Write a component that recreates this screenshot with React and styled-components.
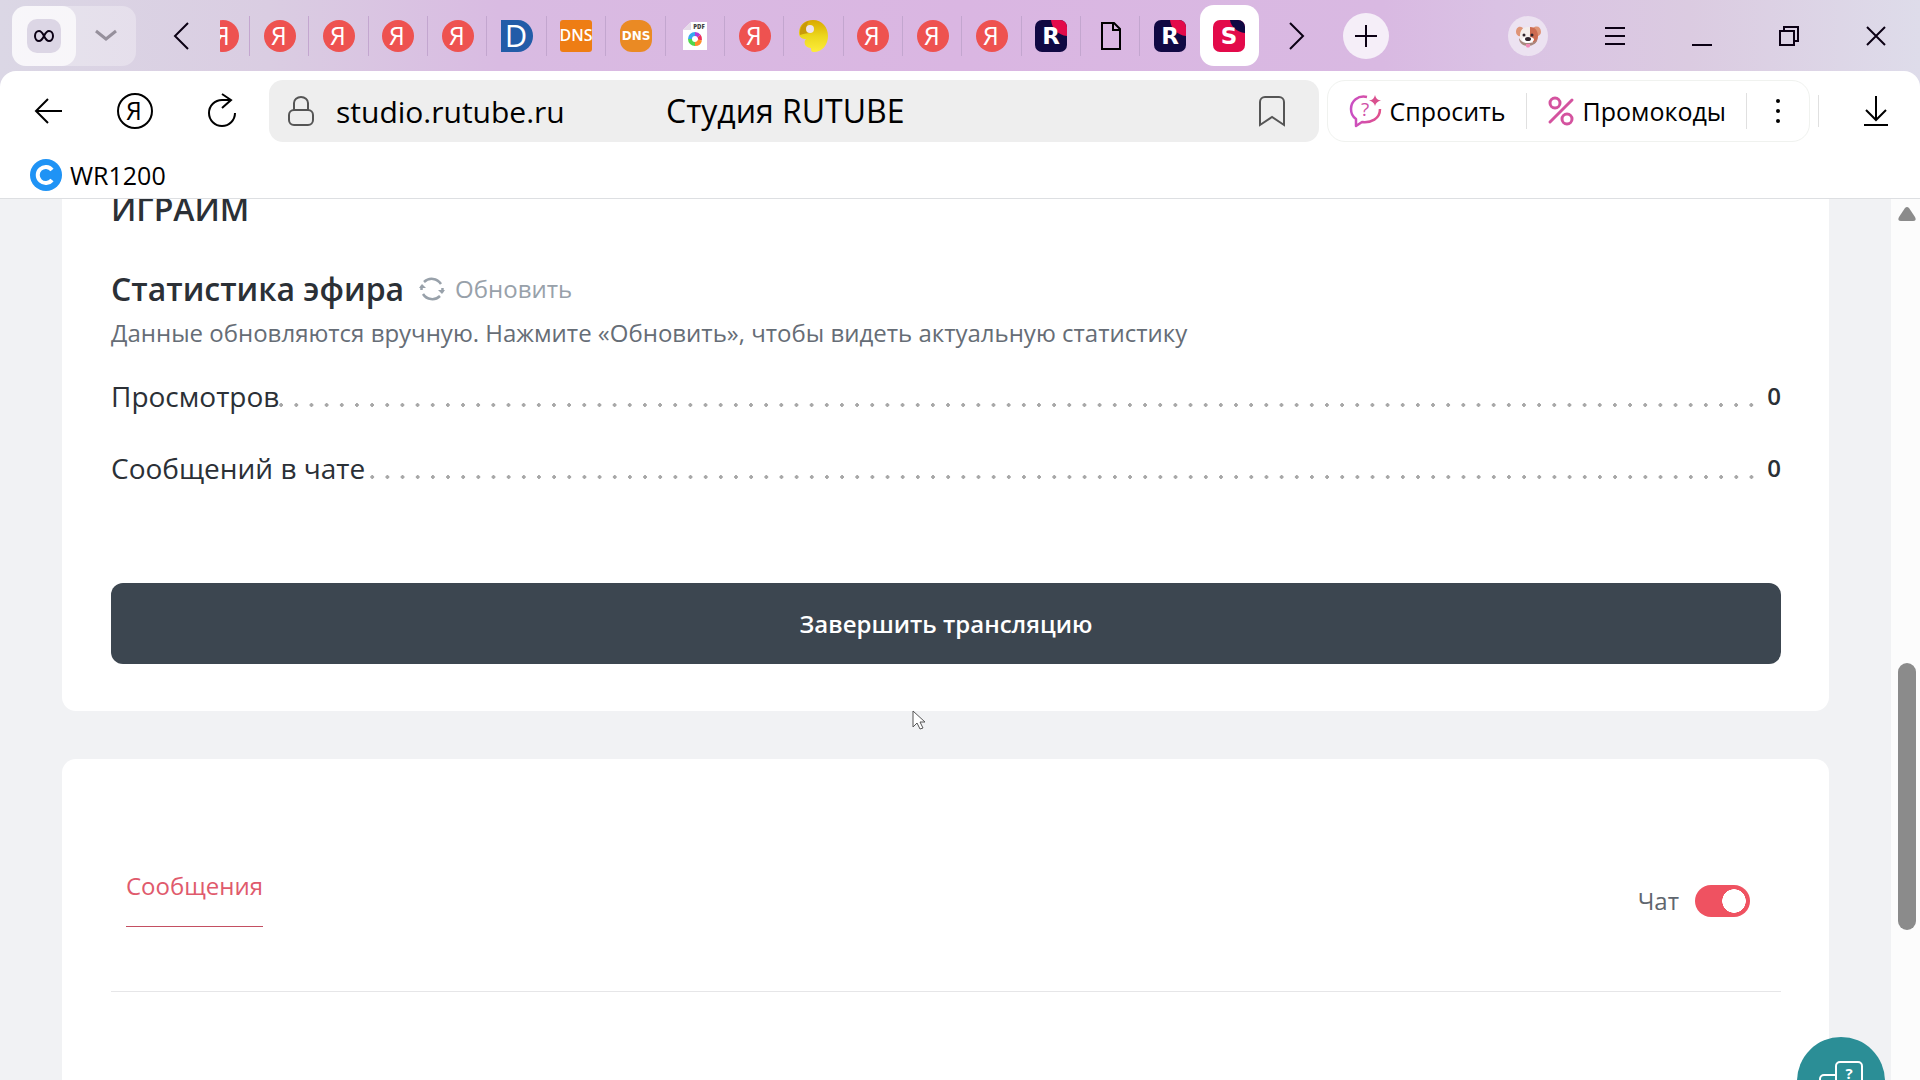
import { useState } from "react";
import styled, { createGlobalStyle } from "styled-components";

const GlobalStyle = createGlobalStyle`
    * {
        box-sizing: border-box;
    }

    body {
        margin: 0;
        overflow: hidden;
        font-family: "Open Sans", "Noto Sans", sans-serif;
        color: #2b3036;
    }

    button {
        font-family: inherit;
        color: inherit;
        background: none;
        border: 0;
        padding: 0;
        cursor: pointer;
    }

    svg {
        display: block;
        flex: none;
        overflow: visible;
    }

    h1, h2, p, dl, dd {
        margin: 0;
    }
`;

const Window = styled.div`
    display: flex;
    flex-direction: column;
    height: 100vh;
    background: linear-gradient(90deg, #dbd7e5 0%, #dacde2 14%, #d9bbe2 26%, #dab6e2 50%, #d9b9e2 72%, #dac2e4 78%, #dbcbe1 88%, #dedcea 100%);
`;

/* Tab strip */

const TabStrip = styled.header`
    display: flex;
    align-items: center;
    flex: none;
    height: 71px;
    padding: 0 1px 0 12px;
`;

const TabGroup = styled.div`
    display: flex;
    flex: none;
    height: 60px;
    border-radius: 14px;
    background: rgba(255, 255, 255, 0.3);
`;

const GroupButton = styled.button`
    display: grid;
    place-items: center;
    width: ${(props) => (props.$active ? "64px" : "60px")};
    border-radius: 14px;
    background: ${(props) => (props.$active ? "rgba(255, 255, 255, 0.7)" : "none")};
`;

const GroupBadge = styled.span`
    display: grid;
    place-items: center;
    width: 34px;
    height: 34px;
    border-radius: 10px;
    background: #dcd6e5;
`;

const ScrollButton = styled.button`
    display: grid;
    place-items: center;
    flex: none;
    width: 84px;
    height: 60px;
    padding: ${(props) => (props.$back ? "0 0 0 6px" : "0 8px 0 0")};
`;

const TabList = styled.nav`
    display: flex;
    flex: 0 1 1039px;
    min-width: 0;
    overflow: hidden;
`;

const Tab = styled.button`
    display: flex;
    align-items: center;
    justify-content: ${(props) => (props.$cut ? "flex-end" : "center")};
    flex: ${(props) => (props.$cut ? "0 0 30px" : "1 1 0")};
    min-width: 0;
    height: 61px;
    padding-right: ${(props) => (props.$cut ? "11px" : "0")};
    border-radius: ${(props) => (props.$active ? "14px" : "0")};
    background: ${(props) =>
        props.$active ? "#fff" : props.$last ? "none" : "linear-gradient(#c3a6cf, #c3a6cf) right center / 1px 40px no-repeat"};
`;

const NewTab = styled.button`
    display: grid;
    place-items: center;
    flex: none;
    width: 46px;
    height: 46px;
    border-radius: 50%;
    background: #f5eef8;
`;

const WindowControls = styled.div`
    display: flex;
    margin-left: auto;
`;

const WindowButton = styled.button`
    display: grid;
    place-items: center;
    width: 87px;
    height: 60px;
`;

/* Toolbar */

const Chrome = styled.div`
    flex: none;
    background: #fff;
    border-radius: 16px 16px 0 0;
    border-bottom: 1px solid #dddfe2;
`;

const Toolbar = styled.div`
    display: flex;
    align-items: center;
    height: 80px;
    padding: 0 1px 0 4px;
`;

const ToolButton = styled.button`
    display: grid;
    place-items: center;
    flex: none;
    width: ${(props) => props.$width || 87}px;
    height: 62px;
`;

const AddressBar = styled.div`
    display: flex;
    align-items: center;
    flex: 1;
    min-width: 0;
    height: 62px;
    margin: 0 8px 0 4px;
    padding: 0 34px 0 19px;
    border-radius: 14px;
    background: #eee;
`;

const UrlInput = styled.input`
    flex: none;
    width: 330px;
    margin-left: 22px;
    padding: 0;
    border: 0;
    outline: 0;
    background: none;
    font-family: inherit;
    font-size: 30px;
    color: #000;
`;

const PageTitle = styled.span`
    font-size: 32px;
    line-height: 44px;
    color: #000;
    white-space: nowrap;
`;

const BookmarkButton = styled.button`
    margin-left: auto;
`;

const Actions = styled.div`
    display: flex;
    align-items: center;
    flex: none;
    height: 62px;
    border: 1px solid #f0f2ef;
    border-radius: 18px;
`;

const ActionButton = styled.button`
    display: flex;
    align-items: center;
    gap: 9px;
    height: 36px;
    padding: 0 20px 0 21px;
    border-right: 1px solid #e0e0e0;
    font-size: 25px;
    line-height: 34px;
    color: #000;
    white-space: nowrap;
`;

const Divider = styled.span`
    flex: none;
    width: 1px;
    height: 32px;
    margin: 0 13px 0 8px;
    background: #e0e0e0;
`;

const Bookmarks = styled.nav`
    display: flex;
    align-items: center;
    height: 47px;
    padding: 0 30px;
`;

const BookmarkLink = styled.a`
    display: flex;
    align-items: center;
    gap: 8px;
    font-size: 25px;
    line-height: 34px;
    color: #000;
    text-decoration: none;
`;

/* Page */

const Viewport = styled.div`
    position: relative;
    display: flex;
    flex: 1;
    min-height: 0;
    overflow: hidden;
    background: #f1f2f4;
`;

const Page = styled.main`
    display: flex;
    flex-direction: column;
    gap: 48px;
    flex: 1;
    min-width: 0;
    padding: 0 62px;
`;

const Card = styled.section`
    flex: ${(props) => (props.$grow ? "1 0 auto" : "none")};
    padding: ${(props) => (props.$grow ? "111px 48px 0 49px" : "0 48px 47px 49px")};
    border-radius: ${(props) => (props.$grow ? "14px 14px 0 0" : "0 0 14px 14px")};
    background: #fff;
`;

const StreamTitle = styled.h1`
    font-size: 32px;
    font-weight: 600;
    line-height: 20px;
`;

const StatsHeader = styled.div`
    display: flex;
    align-items: center;
    gap: 15px;
    margin-top: 48px;
`;

const StatsTitle = styled.h2`
    font-size: 32px;
    font-weight: 600;
    line-height: 44px;
`;

const RefreshButton = styled.button`
    display: flex;
    align-items: center;
    gap: 10px;
    font-size: 24px;
    line-height: 32px;
    color: #98a1aa;
`;

const Hint = styled.p`
    margin-top: 6px;
    font-size: 24px;
    line-height: 32px;
    color: #666d76;
`;

const Stats = styled.dl`
    display: grid;
    gap: 32px;
    margin: 27px 0 95px;
`;

const StatRow = styled.div`
    display: flex;
    align-items: center;
`;

const StatName = styled.dt`
    font-size: 28px;
    line-height: 40px;
`;

/* dots repeat from the right edge so that both rows line up */
const Leader = styled.span`
    flex: 1;
    height: 40px;
    margin-right: 8px;
    background: radial-gradient(circle 2px at 50% 29px, #a8a8a8 85%, transparent) right top / calc(91px / 6) 40px repeat-x;
`;

const StatValue = styled.dd`
    font-size: 24px;
    font-weight: 600;
    line-height: 40px;
`;

const EndButton = styled.button`
    width: 100%;
    height: 81px;
    border-radius: 12px;
    background: #3c4650;
    color: #fff;
    font-size: 24px;
    font-weight: 600;
`;

const ChatHeader = styled.div`
    display: flex;
    align-items: flex-end;
    justify-content: space-between;
    padding: 0 31px 64px 15px;
    border-bottom: 1px solid #e6e6e8;
`;

const ChatTab = styled.button`
    padding-bottom: 24px;
    border-bottom: 1px solid #c44f62;
    color: #e05a6c;
    font-size: 24px;
    line-height: 32px;
`;

const SwitchLabel = styled.label`
    display: flex;
    align-items: center;
    gap: 16px;
    padding-bottom: 10px;
    font-size: 24px;
    line-height: 32px;
    color: #5f666e;
`;

const Switch = styled.input`
    appearance: none;
    width: 55px;
    height: 32px;
    margin: 0;
    border-radius: 16px;
    background: ${(props) =>
        props.checked
            ? "radial-gradient(circle 12px at 39px 50%, #fff 96%, transparent) #ef5261"
            : "radial-gradient(circle 12px at 16px 50%, #fff 96%, transparent) #b9bec4"};
`;

const ScrollTrack = styled.div`
    display: flex;
    flex-direction: column;
    align-items: center;
    flex: none;
    width: 29px;
    padding: 8px 0 0 3px;
    background: #fcfcfc;
`;

const ScrollThumb = styled.div`
    width: 18px;
    height: 267px;
    margin-top: 442px;
    border-radius: 9px;
    background: #8b8b8b;
`;

const HelpButton = styled.button`
    position: absolute;
    right: 35px;
    bottom: -45px;
    width: 88px;
    height: 88px;
    border-radius: 50%;
    background: #2b8e96;
`;

const Pointer = styled.svg`
    position: absolute;
    left: 912px;
    top: 511px;
`;

/* Icons */

const Line = ({ w, h, d, color = "#0b0014", width = 2, ...rest }) => (
    <svg width={w} height={h} viewBox={`0 0 ${w} ${h}`} fill="none" stroke={color} strokeWidth={width} {...rest}>
        <path d={d} />
    </svg>
);

const YandexIcon = () => (
    <svg width="32" height="32" viewBox="0 0 32 32">
        <circle cx="16" cy="16" r="16" fill="#ee5250" />
        <text x="15" y="25" fontSize="25" fontWeight="500" textAnchor="middle" fill="#fff">Я</text>
    </svg>
);

const DIcon = () => (
    <svg width="32" height="32" viewBox="0 0 32 32">
        <path d="M0 0h17a15 16 0 0 1 0 32H0z" fill="#225ca8" />
        <text x="15" y="27" fontSize="31" fontWeight="500" textAnchor="middle" fill="#fff">D</text>
    </svg>
);

const DnsIcon = ({ round }) => (
    <svg width="32" height="32" viewBox="0 0 32 32">
        <rect width="32" height="32" rx={round ? 12 : 3} fill={round ? "#ea8a24" : "#ee7d14"} />
        <text
            x="16"
            y={round ? 20 : 21}
            fontSize={round ? 12 : 16}
            fontWeight={round ? 700 : 600}
            fontFamily={round ? "DejaVu Sans" : "Open Sans"}
            textAnchor="middle"
            fill="#fff"
        >
            DNS
        </text>
    </svg>
);

const PdfIcon = () => (
    <svg width="32" height="32" viewBox="0 0 32 32" fill="none">
        <path d="M12 2h16v28H4V10z" fill="#fff" />
        <path d="M12 2v8H4z" fill="#e6dbe9" />
        <text x="20" y="9" fontSize="6" fontWeight="800" textAnchor="middle" fill="#444">PDF</text>
        <g strokeWidth="4">
            <path d="M16 14a5 5 0 0 1 4 2" stroke="#b13bd6" />
            <path d="M20 16a5 5 0 0 1 1 4" stroke="#f0305a" />
            <path d="M21 20a5 5 0 0 1-5 4" stroke="#ff8a2a" />
            <path d="M16 24a5 5 0 0 1-5-5" stroke="#4fd64a" />
            <path d="M11 19a5 5 0 0 1 5-5" stroke="#37a8f0" />
        </g>
    </svg>
);

const LampIcon = () => (
    <svg width="32" height="32" viewBox="0 0 32 32">
        <defs>
            <linearGradient id="lamp" x1="0" y1="0" x2="0" y2="1">
                <stop offset="0" stopColor="#d9a800" />
                <stop offset="0.5" stopColor="#ecd71c" />
                <stop offset="1" stopColor="#fdec3a" />
            </linearGradient>
        </defs>
        <path d="M15 0c9 0 15 7 15 16s-6 16-14 16c-3 0-3-2-3-4-6 0-8-6-5-9-4 0-7-2-7-6C1 5 7 0 15 0z" fill="url(#lamp)" />
        <path d="M2 15C1 7 6 2 11 1c-3 3-2 9 1 12-4 0-7 1-10 2z" fill="#c99a0a" />
        <circle cx="12" cy="9" r="4" fill="#efe3ee" />
    </svg>
);

const RutubeIcon = ({ letter, back, corner }) => (
    <svg width="32" height="32" viewBox="0 0 32 32">
        <rect width="32" height="32" rx="7" fill={back} />
        <path
            d={letter === "R" ? "M16 0c1 9 7 15 16 16V7a7 7 0 0 0-7-7z" : "M17 0c1 7 7 12 15 13V7a7 7 0 0 0-7-7z"}
            fill={corner}
        />
        <text x="16" y="24" fontSize="23" fontWeight="700" fontFamily="DejaVu Sans" textAnchor="middle" fill="#fff">
            {letter}
        </text>
    </svg>
);

const FileIcon = () => (
    <Line w={32} h={32} d="M7 3h12l6 6v20H7zM18 3v7h7" color="#000" />
);

const PuppyIcon = () => (
    <svg width="40" height="40" viewBox="0 0 40 40">
        <circle cx="20" cy="20" r="20" fill="#ece2f1" />
        <path d="M15 12C11 9 8 12 8 16c0 3 3 5 5 4zM25 12c4-3 8-1 8 4 0 3-3 5-6 4z" fill="#df9476" />
        <path d="M12 20c0-6 3-9 8-9s9 3 9 9c2 6-4 10-9 10s-10-3-8-10z" fill="#f4edeb" />
        <path d="M22 11c6 0 8 5 8 9 0 4-2 8-5 8 1-4-4-6-3-10z" fill="#cd6b50" />
        <path d="M11 22c0 5 4 8 9 8s9-3 9-7c-2 3-5 4-9 4s-7-1-9-5z" fill="#a8887f" />
        <path d="M14 23c2-3 10-3 12 0 0 5-12 5-12 0z" fill="#fff" />
        <circle cx="16" cy="19" r="1.5" fill="#30242c" />
        <circle cx="24" cy="19" r="1.5" fill="#30242c" />
        <ellipse cx="20" cy="23" rx="3" ry="2" fill="#30242c" />
        <path d="M18 28h4v2c0 2-4 2-4 0z" fill="#f08ab6" />
    </svg>
);

const AskIcon = () => (
    <svg width="32" height="32" viewBox="0 0 32 32" fill="none">
        <defs>
            <linearGradient id="ask" x1="0" y1="0" x2="1" y2="0">
                <stop offset="0" stopColor="#c94fc4" />
                <stop offset="1" stopColor="#e0508c" />
            </linearGradient>
        </defs>
        <path
            d="M18 2C9 0 2 6 2 14c0 5 2 8 5 10v7l6-4c9 1 18-3 18-13"
            stroke="url(#ask)"
            strokeWidth="2.5"
            strokeLinejoin="round"
        />
        <path d="M26 0q1 5 6 5.500-5 1-6 5.500-1-4.500-6-5.500 5-.5 6-5.500z" fill="#d9508e" />
        <text x="16" y="21" fontSize="19" fontWeight="500" textAnchor="middle" fill="#d050a8">?</text>
    </svg>
);

const PercentIcon = () => (
    <svg width="26" height="30" viewBox="0 0 26 30" fill="none" stroke="#d4539f" strokeWidth="3" strokeLinecap="round">
        <circle cx="7" cy="7" r="5" />
        <circle cx="19" cy="23" r="5" />
        <path d="M24 4L2 26" />
    </svg>
);

const RefreshIcon = () => (
    <svg width="26" height="26" viewBox="0 0 26 26" fill="none" stroke="#98a1aa" strokeWidth="2.5">
        <path d="M5 6a11 11 0 0 1 17 2M21 20A11 11 0 0 1 4 18M2.500 14a11 11 0 0 1 .5-4M23.500 12a11 11 0 0 1-.5 4" />
        <path d="M0 12l3-4 4 4zM26 14l-3 4-4-4z" fill="#98a1aa" stroke="none" />
    </svg>
);

const yandex = { name: "Яндекс", icon: <YandexIcon /> };
const rutube = { name: "RUTUBE", icon: <RutubeIcon letter="R" back="#100943" corner="#e30a4a" /> };

const tabs = [
    yandex,
    yandex,
    yandex,
    yandex,
    { name: "D", icon: <DIcon /> },
    { name: "DNS", icon: <DnsIcon /> },
    { name: "DNS", icon: <DnsIcon round /> },
    { name: "PDF", icon: <PdfIcon /> },
    yandex,
    { name: "Lamp", icon: <LampIcon /> },
    yandex,
    yandex,
    yandex,
    rutube,
    { name: "Файл", icon: <FileIcon /> },
    rutube,
];

const stats = [
    { name: "Просмотров", value: 0 },
    { name: "Сообщений в чате", value: 0 },
];

function Tabs() {
    return (
        <TabStrip>
            <TabGroup>
                <GroupButton $active aria-label="Группа вкладок">
                    <GroupBadge>
                        <Line w={20} h={14} d="M10 7C8 3 6 2 5 2a4 5 0 0 0 0 10c1 0 3-1 5-5s4-5 5-5a4 5 0 0 1 0 10c-1 0-3-1-5-5z" />
                    </GroupBadge>
                </GroupButton>
                <GroupButton aria-label="Список групп">
                    <Line w={22} h={12} d="M1 1l10 8 10-8" color="#96909c" width={3} />
                </GroupButton>
            </TabGroup>
            <ScrollButton $back aria-label="Назад по вкладкам">
                <Line w={16} h={28} d="M15 1L2 14l13 13" />
            </ScrollButton>
            <TabList>
                <Tab $cut aria-label="Яндекс">
                    <YandexIcon />
                </Tab>
                {tabs.map((tab, i) => (
                    <Tab key={i} $last={i === tabs.length - 1} aria-label={tab.name}>
                        {tab.icon}
                    </Tab>
                ))}
                <Tab $active aria-label="Студия RUTUBE">
                    <RutubeIcon letter="S" back="#e30a4a" corner="#100943" />
                </Tab>
            </TabList>
            <ScrollButton aria-label="Вперёд по вкладкам">
                <Line w={16} h={28} d="M1 1l13 13L1 27" />
            </ScrollButton>
            <NewTab aria-label="Новая вкладка">
                <Line w={24} h={24} d="M12 1v22M1 12h22" />
            </NewTab>
            <WindowControls>
                <WindowButton aria-label="Профиль"><PuppyIcon /></WindowButton>
                <WindowButton aria-label="Меню">
                    <Line w={20} h={20} d="M0 2h20M0 10h20M0 18h20" />
                </WindowButton>
                <WindowButton aria-label="Свернуть">
                    <Line w={20} h={20} d="M0 19h20" />
                </WindowButton>
                <WindowButton aria-label="Развернуть">
                    <Line w={20} h={20} d="M1 5h14v14H1zM5 5V1h14v14h-4" />
                </WindowButton>
                <WindowButton aria-label="Закрыть">
                    <Line w={20} h={20} d="M1 1l18 18M19 1L1 19" />
                </WindowButton>
            </WindowControls>
        </TabStrip>
    );
}

function BrowserBar() {
    return (
        <Chrome>
            <Toolbar>
                <ToolButton aria-label="Назад">
                    <Line w={28} h={28} d="M28 14H2M14 2L2 14l12 12" color="#000" />
                </ToolButton>
                <ToolButton aria-label="Яндекс">
                    <svg width="36" height="36" viewBox="0 0 36 36">
                        <circle cx="18" cy="18" r="17" fill="none" stroke="#000" strokeWidth="2" />
                        <text x="17" y="27" fontSize="25" textAnchor="middle">Я</text>
                    </svg>
                </ToolButton>
                <ToolButton aria-label="Обновить страницу">
                    <Line w={30} h={36} d="M28 20A13 13 0 1 1 15 7h9M15 1l9 6-9 8" color="#000" />
                </ToolButton>
                <AddressBar>
                    <svg width="26" height="30" viewBox="0 0 26 30" fill="none" stroke="#555" strokeWidth="2">
                        <rect x="1" y="14" width="24" height="15" rx="5" />
                        <path d="M6 14V7a7 6 0 0 1 14 0v7" />
                    </svg>
                    <UrlInput aria-label="Адрес" defaultValue="studio.rutube.ru" />
                    <PageTitle>Студия RUTUBE</PageTitle>
                    <BookmarkButton aria-label="Добавить закладку">
                        <Line w={26} h={30} d="M1 29V6a5 5 0 0 1 5-5h14a5 5 0 0 1 5 5v23l-12-8z" color="#555" />
                    </BookmarkButton>
                </AddressBar>
                <Actions>
                    <ActionButton>
                        <AskIcon />
                        Спросить
                    </ActionButton>
                    <ActionButton>
                        <PercentIcon />
                        Промокоды
                    </ActionButton>
                    <ToolButton $width={62} aria-label="Ещё">
                        <svg width="6" height="26" viewBox="0 0 6 26">
                            <circle cx="3" cy="3" r="2" />
                            <circle cx="3" cy="13" r="2" />
                            <circle cx="3" cy="23" r="2" />
                        </svg>
                    </ToolButton>
                </Actions>
                <Divider />
                <ToolButton aria-label="Загрузки">
                    <Line w={24} h={30} d="M12 0v24M2 14l10 10 10-10M0 29h24" color="#000" />
                </ToolButton>
            </Toolbar>
            <Bookmarks>
                <BookmarkLink href="#wr1200">
                    <svg width="32" height="32" viewBox="0 0 32 32" fill="none">
                        <circle cx="16" cy="16" r="16" fill="#1f93f5" />
                        <path d="M22 11a8 8 0 1 0 0 10" stroke="#fff" strokeWidth="4" />
                    </svg>
                    WR1200
                </BookmarkLink>
            </Bookmarks>
        </Chrome>
    );
}

function App() {
    const [chatOn, setChatOn] = useState(true);

    return (
        <>
            <GlobalStyle />
            <Window>
                <Tabs />
                <BrowserBar />
                <Viewport>
                    <Page>
                        <Card>
                            <StreamTitle>ИГРАИМ</StreamTitle>
                            <StatsHeader>
                                <StatsTitle>Статистика эфира</StatsTitle>
                                <RefreshButton>
                                    <RefreshIcon />
                                    Обновить
                                </RefreshButton>
                            </StatsHeader>
                            <Hint>Данные обновляются вручную. Нажмите «Обновить», чтобы видеть актуальную статистику</Hint>
                            <Stats>
                                {stats.map((stat) => (
                                    <StatRow key={stat.name}>
                                        <StatName>{stat.name}</StatName>
                                        <Leader />
                                        <StatValue>{stat.value}</StatValue>
                                    </StatRow>
                                ))}
                            </Stats>
                            <EndButton>Завершить трансляцию</EndButton>
                        </Card>
                        <Card $grow>
                            <ChatHeader>
                                <ChatTab>Сообщения</ChatTab>
                                <SwitchLabel htmlFor="chat">
                                    Чат
                                    <Switch
                                        id="chat"
                                        type="checkbox"
                                        checked={chatOn}
                                        onChange={(e) => setChatOn(e.target.checked)}
                                    />
                                </SwitchLabel>
                            </ChatHeader>
                        </Card>
                    </Page>
                    <ScrollTrack>
                        <svg width="18" height="14" viewBox="0 0 18 14">
                            <path d="M7 1q2-2 4 0l6 9q2 4-2 4H3q-4 0-2-4z" fill="#8b8b8b" />
                        </svg>
                        <ScrollThumb />
                    </ScrollTrack>
                    <HelpButton aria-label="Помощь">
                        <svg width="88" height="88" viewBox="0 0 88 88" fill="none" stroke="#fff" strokeWidth="2">
                            <path d="M40 38H27a4 4 0 0 0-4 4v18a4 4 0 0 0 4 4h3v6l7-6h10a4 4 0 0 0 4-4v-7" />
                            <path d="M43 25h18a4 4 0 0 1 4 4v24l-6-4H43a4 4 0 0 1-4-4V29a4 4 0 0 1 4-4z" />
                            <text x="52" y="42" fontSize="15" fontWeight="700" textAnchor="middle" fill="#fff" stroke="none">?</text>
                        </svg>
                    </HelpButton>
                    <Pointer width="14" height="20" viewBox="0 0 14 20" fill="#fff" stroke="#555">
                        <path d="M1 1v16l4-4 3 6 3-1-3-6h5z" />
                    </Pointer>
                </Viewport>
            </Window>
        </>
    );
}

export default App;
